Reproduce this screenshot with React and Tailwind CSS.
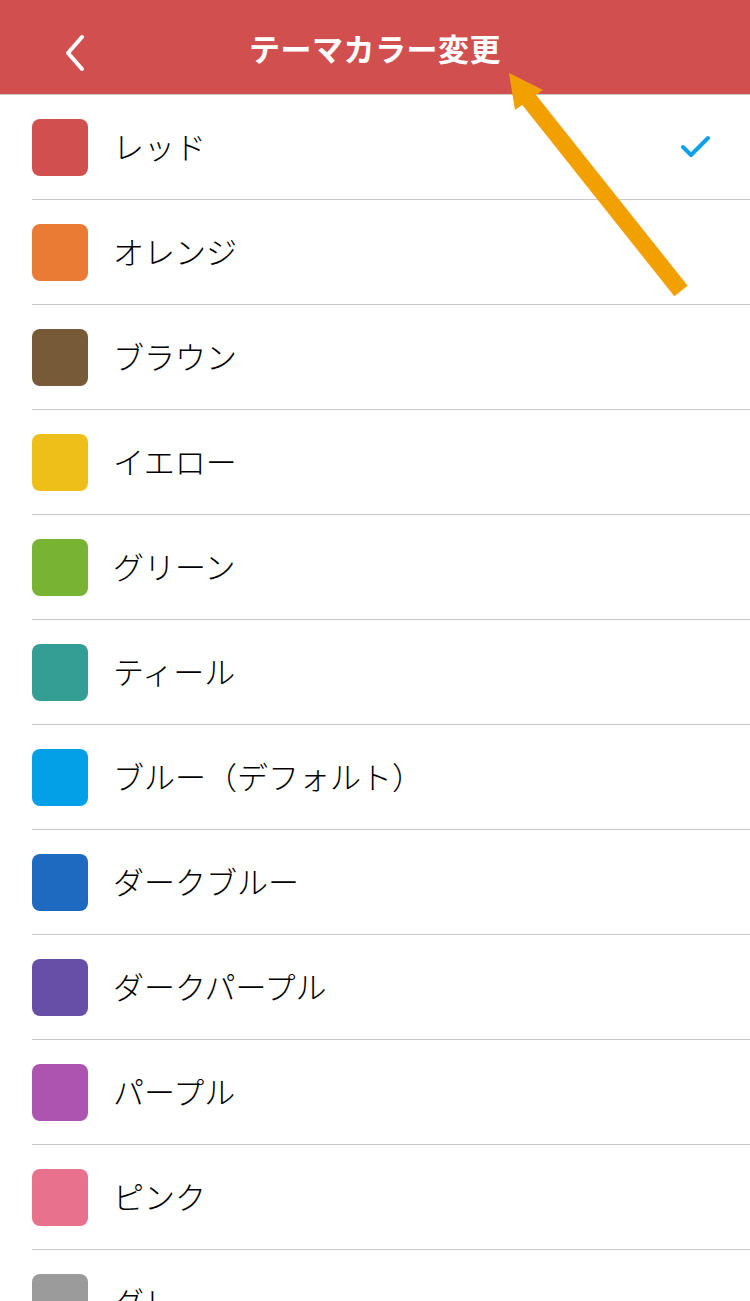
import React from 'react';

const colors = [
  { name: 'レッド', hex: 'bg-[#d24f4f]', selected: true },
  { name: 'オレンジ', hex: 'bg-[#e97b35]' },
  { name: 'ブラウン', hex: 'bg-[#775a37]' },
  { name: 'イエロー', hex: 'bg-[#efbf19]' },
  { name: 'グリーン', hex: 'bg-[#79b333]' },
  { name: 'ティール', hex: 'bg-[#349e95]' },
  { name: 'ブルー（デフォルト）', hex: 'bg-[#03a0e8]' },
  { name: 'ダークブルー', hex: 'bg-[#1d6ac0]' },
  { name: 'ダークパープル', hex: 'bg-[#674fa8]' },
  { name: 'パープル', hex: 'bg-[#ad54b1]' },
  { name: 'ピンク', hex: 'bg-[#e8718d]' },
  { name: 'グレー', hex: 'bg-[#9b9b9b]' },
];

const font = { fontFamily: '"Noto Sans CJK JP", "Noto Sans", sans-serif' };

export default function App() {
  return (
    <div className="relative w-[750px] h-[1301px] overflow-hidden bg-white" style={font}>
      {/* header */}
      <header className="relative flex items-center justify-center h-[95px] bg-[#d24f4f] border-b border-[#c9c9c9]">
        <button className="absolute left-[54px] top-[26px] p-2">
          <svg width="24" height="40" viewBox="0 0 24 40" fill="none">
            <path d="M20 3 L6 19 L20 35" stroke="white" strokeWidth="4" strokeLinecap="round" strokeLinejoin="round" />
          </svg>
        </button>
        <h1 className="text-white text-[31px] font-bold tracking-[0.5px] leading-none">テーマカラー変更</h1>
      </header>

      <ul>
        {colors.map((c) => (
          <li key={c.name} className="flex items-center h-[105px] pl-[32px]">
            <div className="flex items-center h-full w-full border-b border-[#c8c8c8]">
              <div className={`w-[56px] h-[57px] rounded-[8px] ${c.hex}`} />
              <span className="ml-[25px] text-[31px] text-black font-light leading-none -mt-[3px]">{c.name}</span>
              {c.selected && (
                <svg className="ml-auto mr-[38px]" width="32" height="24" viewBox="0 0 32 24" fill="none">
                  <path d="M3 12 L11 20 L28 3" stroke="#0ea0e6" strokeWidth="4" strokeLinecap="round" strokeLinejoin="round" />
                </svg>
              )}
            </div>
          </li>
        ))}
      </ul>

      {/* annotation arrow */}
      <svg className="absolute left-0 top-0 pointer-events-none" width="750" height="320" viewBox="0 0 750 320">
        <line x1="681" y1="291" x2="526" y2="96" stroke="#f29f00" strokeWidth="17" />
        <polygon points="509,73 543,90 515,110" fill="#f29f00" />
      </svg>
    </div>
  );
}
